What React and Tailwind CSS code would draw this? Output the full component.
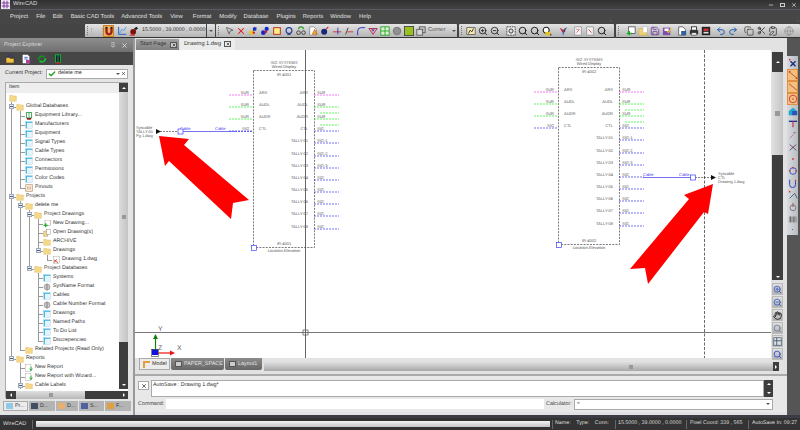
import React from 'react';
import { ZoomIn, ZoomOut, Search, Save, Undo2, Redo2, Copy, Scissors, ClipboardPen, Globe, MousePointer2, X, Check, Pin, Minus, Hand } from 'lucide-react';

const MENU = [
  ['Project', 'ml-[10px]'], ['File', 'ml-[8px]'], ['Edit', 'ml-[7px]'], ['Basic CAD Tools', 'ml-[8px]'],
  ['Advanced Tools', 'ml-[7px]'], ['View', 'ml-[8px]'], ['Format', 'ml-[10px]'], ['Modify', 'ml-[8px]'],
  ['Database', 'ml-[7px]'], ['Plugins', 'ml-[8px]'], ['Reports', 'ml-[7px]'], ['Window', 'ml-[7px]'], ['Help', 'ml-[8px]'],
];

// 12x12 toolbar glyphs
const Ico = ({ children, size = 10 }) => (
  <svg width={size} height={size} viewBox="0 0 12 12" className="shrink-0">{children}</svg>
);

const G = {
  magnet: <Ico><path d="M2 2v5a4 4 0 0 0 8 0V2H8v5a2 2 0 0 1-4 0V2z" fill="#c01818" stroke="#401010" strokeWidth=".5" /><rect x="2" y="1" width="2" height="2" fill="#222" /><rect x="8" y="1" width="2" height="2" fill="#222" /></Ico>,
  chart: <Ico><path d="M2 1v9h9" fill="none" stroke="#3060d0" strokeWidth="1.2" /><path d="M3 9l3-5 2 2 3-5" fill="none" stroke="#40a0e0" strokeWidth="1" /></Ico>,
  redbomb: <Ico><circle cx="5" cy="7" r="3.5" fill="#7a1010" /><path d="M6 3l3-2 2 2-3 2z" fill="#222" /><path d="M1 11h6" stroke="#d02020" strokeWidth="1.2" /></Ico>,
  cursor: <MousePointer2 size={9} color="#222" strokeWidth={1.5} />,
  x: <X size={10} color="#e01818" strokeWidth={2.5} />,
  dotsY: <Ico><path d="M2 10L10 2" stroke="#303030" strokeWidth="1" /><circle cx="8" cy="3.5" r="2.3" fill="#2030c0" /><circle cx="4" cy="8" r="2.6" fill="#e8c820" /><circle cx="7" cy="8" r="1.4" fill="#d02020" /></Ico>,
  dotsB: <Ico><circle cx="8" cy="3.5" r="2.5" fill="#1828c8" /><circle cx="4" cy="8" r="2.8" fill="#1828c8" /><circle cx="7" cy="7" r="1.6" fill="#d02020" /></Ico>,
  note: <Ico><rect x="2" y="2" width="8" height="8" fill="#fff080" stroke="#c03030" strokeWidth="1.2" /></Ico>,
  ring: <Ico><circle cx="6" cy="5.5" r="3.5" fill="none" stroke="#2040a0" strokeWidth="1.4" /><path d="M4 10h4" stroke="#203060" strokeWidth="1.2" /></Ico>,
  bike: <Ico><circle cx="3" cy="8" r="2.2" fill="none" stroke="#333" /><circle cx="9" cy="8" r="2.2" fill="none" stroke="#333" /><path d="M3 4a3 3 0 0 1 6 0" fill="none" stroke="#30a030" strokeWidth="1.4" /></Ico>,
  pageY: <Ico><path d="M2 1h5l3 3v7H2z" fill="#fff" stroke="#555" strokeWidth=".6" /><path d="M5 10l3-6 3 6z" fill="#e8b020" stroke="#c03020" strokeWidth=".6" /></Ico>,
  bomb: <Ico><circle cx="5" cy="7" r="3.6" fill="#182878" /><path d="M7 4l3-3" stroke="#d02040" strokeWidth="1.3" /></Ico>,
  cross: <Ico><path d="M1 7h10" stroke="#d02020" strokeWidth="1" /><path d="M7 2v8" stroke="#2030c0" strokeWidth="1" /></Ico>,
  line: <Ico><path d="M2 10L5 2" stroke="#303030" strokeWidth="1" /><path d="M4 7h7" stroke="#d02020" strokeWidth="1" /></Ico>,
  curve: <Ico><path d="M2 11V6a4 4 0 0 1 4-4h5" fill="none" stroke="#3040c0" strokeWidth="1.2" /></Ico>,
  tri: <Ico><path d="M1 3h10L6 10z" fill="#f0b0c0" stroke="#a02040" strokeWidth="1" /><path d="M4 4h4L6 7z" fill="#3050b0" /></Ico>,
  grid: <Ico><rect x="1" y="1" width="10" height="10" fill="#d8f0d0" stroke="#20a020" /><path d="M6 1v10M1 6h10" stroke="#20a020" /></Ico>,
  disc: <Ico><circle cx="6" cy="6" r="4.5" fill="#909090" stroke="#707070" /></Ico>,
  green: <Ico><rect x="0.5" y="0.5" width="11" height="11" fill="#98c020" stroke="#404040" /></Ico>,
  stack: <Ico><rect x="4" y="1" width="7" height="7" fill="#c0c0c0" stroke="#555" /><rect x="1" y="4" width="7" height="7" fill="#d8d8d8" stroke="#555" /></Ico>,
  ruler: <Ico><rect x="1" y="2" width="10" height="8" fill="#f4e8b0" stroke="#444" strokeWidth=".8" /><path d="M3 9l2-4 2 2 2-4" fill="none" stroke="#222" strokeWidth="1" /></Ico>,
  zin: <ZoomIn size={10} color="#222" strokeWidth={2} />,
  zout: <ZoomOut size={10} color="#222" strokeWidth={2} />,
  zall: <Ico><rect x="1" y="1" width="10" height="10" fill="#eee" stroke="#333" strokeDasharray="2 1" /><circle cx="6" cy="6" r="2.5" fill="#dde" stroke="#222" /></Ico>,
  zw: <Search size={10} color="#222" strokeWidth={2.4} />,
  zy: <Ico><circle cx="5" cy="5" r="3.6" fill="#fff" stroke="#222" strokeWidth="1.3" /><path d="M8 8l3 3" stroke="#222" strokeWidth="1.6" /><rect x="4" y="7" width="6" height="4" fill="#e8c020" /></Ico>,
  pen: <Ico><path d="M2 2l4 7 3-3z" fill="#d02040" /><path d="M8 3l-2 8" stroke="#2080e0" strokeWidth="1.4" /><path d="M10 2L7 7" stroke="#202020" /></Ico>,
  pgA: <Ico><rect x="2" y="1" width="8" height="10" fill="#f4f4f4" stroke="#999" /><path d="M4 8l4-4M4 4h3" stroke="#e06060" /></Ico>,
  pgB: <Ico><rect x="2" y="1" width="8" height="10" fill="#eee" stroke="#999" /><path d="M4 4l4 4" stroke="#e04040" /></Ico>,
  newg: <Ico><rect x="3" y="1" width="8" height="8" fill="#fff" stroke="#555" /><path d="M1 9h6M4 6v5" stroke="#10b020" strokeWidth="1.6" /></Ico>,
  folder: <Ico><path d="M1 3h4l1 1h5v7H1z" fill="#f0d070" stroke="#c8a040" strokeWidth=".5" /><rect x="6" y="1" width="5" height="7" fill="#fff" stroke="#aaa" strokeWidth=".5" /></Ico>,
  floppy: <Save size={10} color="#7040a0" strokeWidth={2} />,
  floppyY: <Ico><rect x="1" y="2" width="9" height="9" fill="#8050b0" /><rect x="3" y="3" width="5" height="3" fill="#fff" /><path d="M6 6l2 2 3-6" fill="none" stroke="#e0c020" strokeWidth="1.3" /></Ico>,
  doc: <Ico><path d="M2 1h5l3 3v7H2z" fill="#fff" stroke="#333" strokeWidth=".8" /><rect x="5" y="6" width="6" height="5" fill="#3060a0" /></Ico>,
  print: <Ico><rect x="3" y="1" width="6" height="4" fill="#fff" stroke="#222" /><rect x="1" y="5" width="10" height="5" fill="#303030" /><rect x="3" y="8" width="6" height="3" fill="#ddd" stroke="#222" strokeWidth=".5" /></Ico>,
  film: <Ico><rect x="1" y="1" width="10" height="10" fill="#202020" /><rect x="3" y="3" width="6" height="3" fill="#d03030" /><rect x="3" y="7" width="6" height="2" fill="#ddd" /></Ico>,
  undo: <Undo2 size={10} color="#2060b0" strokeWidth={2.4} />,
  redo: <Redo2 size={10} color="#2060b0" strokeWidth={2.4} />,
  copy: <Copy size={10} color="#333" strokeWidth={1.6} />,
  cut: <Scissors size={9} color="#222" strokeWidth={2} />,
  paste: <ClipboardPen size={10} color="#333" strokeWidth={1.8} />,
  globe: <Globe size={10} color="#8a8a8a" strokeWidth={1.6} />,
};

const Cells = ({ names }) => (
  <>
    {names.map((n, i) => (
      <span key={i} className="w-[12px] h-full flex items-center justify-center">{G[n]}</span>
    ))}
  </>
);

const Grip = () => (
  <span className="w-[3px] h-[9px] mx-[1px] shrink-0 border-l border-dotted border-[#777]" />
);

const Drop = () => <span className="w-0 h-0 border-x-[2px] border-x-transparent border-t-[2px] border-t-[#555]" />;

const Toolbar = ({ className, children }) => (
  <div className={`h-[14px] flex items-center rounded-[1px] bg-gradient-to-b from-[#e4e4e4] to-[#b4b4b4] border-b border-[#333] shrink-0 ${className}`}>
    {children}
  </div>
);

function TopToolbars() {
  return (
    <div className="h-[14px] flex pl-[85px] bg-[#444] shrink-0">
      <Toolbar className="w-[130px] pl-[1px]">
        <Grip />
        <span className="w-[12px] h-[6px] border-x border-dotted border-[#aaa]" />
        <span className="w-[11px] h-[12px] flex items-center justify-center bg-[#f0b060] border border-[#d08020]">{G.magnet}</span>
        <span className="w-[2px]" />
        <Cells names={['chart', 'redbomb']} />
        <span className="ml-[2px] w-[64px] text-[5.3px] text-[#333] whitespace-nowrap">15.5000 , 39.0000 , 0.0000</span>
        <span className="w-[9px] h-full flex items-center justify-center border-l border-[#444]"><Drop /></span>
      </Toolbar>
      <Toolbar className="ml-[1px] w-[241px] pl-[1px]">
        <Grip />
        <span className="w-[1px]" />
        <Cells names={['cursor', 'x', 'dotsY', 'dotsB', 'note', 'ring', 'bike', 'pageY', 'bomb', 'cross', 'line', 'curve', 'tri', 'grid', 'disc', 'green', 'stack']} />
        <span className="ml-[1px] w-[24px] text-[5.7px] text-[#555]">Corner</span>
        <Drop />
      </Toolbar>
      <Toolbar className="ml-[2px] w-[155px] pl-[1px]">
        <Grip />
        <Cells names={['ruler', 'zin', 'zout']} />
        <span className="w-[4px]" />
        <Cells names={['zall', 'zw', 'zw', 'zy']} />
        <span className="w-[4px]" />
        <Cells names={['pen']} />
        <span className="w-[3px]" />
        <Cells names={['pgA', 'pgB', 'zw']} />
        <span className="ml-[1px]"><Drop /></span>
      </Toolbar>
      <Toolbar className="ml-[2px] w-[184px] pl-[1px]">
        <Grip />
        <span className="w-[3px]" />
        <Cells names={['newg', 'folder', 'floppy', 'floppyY']} />
        <span className="w-[3px]" />
        <Cells names={['doc', 'print', 'film']} />
        <span className="w-[3px]" />
        <Cells names={['undo', 'redo']} />
        <span className="w-[4px]" />
        <Cells names={['copy', 'cut', 'paste']} />
        <span className="w-[4px]" />
        <Cells names={['globe']} />
        <span className="ml-[1px]"><Drop /></span>
      </Toolbar>
    </div>
  );
}

// tree icons
const TreeIcon = ({ type }) => {
  if (type === 'folder') return <Ico size={8}><path d="M1 2h4l1 1h5v8H1z" fill="#f6d88a" stroke="#dcb860" strokeWidth=".6" /></Ico>;
  if (type === 'table') return <Ico size={8}><rect x="1" y="1" width="10" height="10" fill="#e4f4fa" stroke="#a8d0e0" strokeWidth=".6" /><path d="M1 2h10M2 2v9" stroke="#30b0e8" strokeWidth="1.6" /></Ico>;
  if (type === 'gear') return <Ico size={8}><circle cx="6" cy="6" r="4.5" fill="#c8c8c8" stroke="#909090" /><path d="M6 1v10" stroke="#808080" strokeWidth="1.4" /></Ico>;
  if (type === 'pin') return <Ico size={8}><rect x="1" y="1" width="10" height="10" fill="#f6e8d8" stroke="#b89878" /><path d="M3 6h6M4 3v6M8 3v6" stroke="#c8a080" strokeWidth=".8" /></Ico>;
  if (type === 'equip') return <Ico size={8}><rect x="2" y="1" width="8" height="8" fill="#fff" stroke="#109030" strokeWidth="1.2" /><path d="M6 1v8" stroke="#109030" /><rect x="3" y="9" width="6" height="2.5" fill="#a01010" /></Ico>;
  if (type === 'new') return <Ico size={8}><rect x="3" y="0" width="8" height="8" fill="#fff" stroke="#666" strokeWidth=".6" /><path d="M1 8h6M4 5v6" stroke="#10b020" strokeWidth="1.8" /></Ico>;
  if (type === 'open') return <Ico size={8}><path d="M1 3h6v8H1z" fill="#f6d88a" stroke="#a08040" strokeWidth=".6" /><rect x="5" y="1" width="6" height="7" fill="#fff" stroke="#777" strokeWidth=".6" /></Ico>;
  if (type === 'dwg') return <Ico size={8}><rect x="2" y="0.5" width="9" height="11" fill="#fff" stroke="#999" strokeWidth=".6" /><path d="M3 6l6 4M3 10l4-5" stroke="#d83018" strokeWidth="1.3" /></Ico>;
  if (type === 'report') return <Ico size={8}><rect x="1" y="0.5" width="8" height="11" fill="#fff" stroke="#999" strokeWidth=".6" /><path d="M9 4v5M7 7l2 3 2-3" fill="none" stroke="#10a020" strokeWidth="1.3" /></Ico>;
  return null;
};

const TREE = [
  { t: 'Global Databases', open: true, kids: [
    { t: 'Equipment Library...', i: 'equip' }, { t: 'Manufacturers', i: 'table' }, { t: 'Equipment', i: 'table' },
    { t: 'Signal Types', i: 'table' }, { t: 'Cable Types', i: 'table' }, { t: 'Connectors', i: 'table' },
    { t: 'Permissions', i: 'table' }, { t: 'Color Codes', i: 'table' }, { t: 'Pinouts', i: 'pin' },
  ] },
  { t: 'Projects', open: true, kids: [
    { t: 'delete me', open: true, kids: [
      { t: 'Project Drawings', open: true, kids: [
        { t: 'New Drawing...', i: 'new' }, { t: 'Open Drawing(s)', i: 'open' }, { t: 'ARCHIVE' },
        { t: 'Drawings', open: true, kids: [{ t: 'Drawing 1.dwg', i: 'dwg' }] },
      ] },
      { t: 'Project Databases', open: true, kids: [
        { t: 'Systems', i: 'table' }, { t: 'SysName Format', i: 'gear' }, { t: 'Cables', i: 'table' },
        { t: 'Cable Number Format', i: 'gear' }, { t: 'Drawings', i: 'table' }, { t: 'Named Paths', i: 'table' },
        { t: 'To Do List', i: 'table' }, { t: 'Discrepencies', i: 'table' },
      ] },
    ] },
    { t: 'Related Projects (Read Only)' },
  ] },
  { t: 'Reports', open: true, kids: [
    { t: 'New Report', i: 'report' }, { t: 'New Report with Wizard...', i: 'report' },
    { t: 'Cable Labels', closed: true, more: true },
  ] },
];

function flatten(nodes, guides, out) {
  nodes.forEach((n, idx) => {
    const last = idx === nodes.length - 1 && !n.more;
    out.push({ ...n, guides, last });
    if (n.kids) flatten(n.kids, [...guides, !last], out);
  });
  return out;
}
const ROWS = flatten(TREE, [], []);

const TreeRow = ({ row }) => (
  <div className="h-[9px] flex items-center shrink-0 text-[5.3px] text-[#333] whitespace-nowrap">
    {row.guides.map((on, i) => (
      <span key={i} className="relative w-[9px] h-full shrink-0">
        {on && <span className="absolute left-[5px] top-0 bottom-0 w-px bg-[#999]" />}
      </span>
    ))}
    <span className="relative w-[9px] h-full shrink-0">
      <span className={`absolute left-[5px] top-0 w-px bg-[#999] ${row.last ? 'h-1/2' : 'h-full'}`} />
      <span className="absolute left-[5px] top-1/2 w-[5px] h-px bg-[#999]" />
      {(row.open || row.closed) && (
        <span className="absolute left-[3px] top-[2px] w-[5px] h-[5px] bg-[#e8eef4] border border-[#9aa8b8] flex items-center justify-center">
          <span className="w-[3px] h-px bg-[#506080]" />
        </span>
      )}
    </span>
    <span className="ml-[1px] w-[8px] flex justify-center shrink-0"><TreeIcon type={row.i || 'folder'} /></span>
    <span className="ml-[2px]">{row.t}</span>
  </div>
);

const BOTTOM_TABS = [
  ['Pr...', 'w-[25px]', true], ['D...', 'w-[26px]'], ['D...', 'w-[22px]'], ['S...', 'w-[25px]'], ['F...', 'w-[26px]'],
];

function LeftPanel() {
  return (
    <div className="w-[133px] shrink-0 flex flex-col bg-[#e4e4e4]">
      <div className="h-[14px] flex items-center justify-between px-[4px] bg-gradient-to-b from-[#8e8e8e] to-[#707070] text-[5.4px] text-[#ddd] shrink-0">
        <span>Project Explorer</span>
        <span className="flex items-center gap-[5px] pr-[1px]">
          <Pin size={6} color="#ddd" />
          <X size={7} color="#ddd" strokeWidth={3} />
        </span>
      </div>
      <div className="h-[13px] flex items-center gap-[6px] pl-[5px] bg-[#464646] shrink-0">
        <Ico><path d="M1 4h4l1 1h5v6H1z" fill="#f0c040" stroke="#222" strokeWidth=".8" /><path d="M4 3l3-2 2 2" stroke="#2030a0" fill="none" /></Ico>
        <Ico><path d="M2 1h6l2 2v8H2z" fill="#fff" /><path d="M4 4h4M4 6h4" stroke="#3050c0" /><rect x="6" y="7" width="5" height="4" fill="#b040a0" /></Ico>
        <Ico><path d="M2 7a4 4 0 0 1 7-3" fill="none" stroke="#109020" strokeWidth="2" /><path d="M10 5a4 4 0 0 1-7 3" fill="none" stroke="#10c030" strokeWidth="2" /></Ico>
        <Ico><rect x="3" y="1" width="6" height="9" fill="#123" stroke="#10c030" /><path d="M6 1v9" stroke="#10c030" /><rect x="4" y="10" width="4" height="2" fill="#c02020" /></Ico>
      </div>
      <div className="h-[17px] flex items-center pl-[5px] text-[5.4px] text-[#333] shrink-0">
        <span className="w-[41px] whitespace-nowrap">Current Project:</span>
        <div className="w-[82px] h-[10px] flex items-center bg-white border border-[#aaa] pl-[1px]">
          <Check size={8} color="#20a020" strokeWidth={4} />
          <span className="ml-[2px] flex-1 text-[5.4px]">delete me</span>
          <Drop />
          <X size={5} color="#333" strokeWidth={3} className="mx-[1px]" />
        </div>
      </div>
      <div className="h-[316px] mx-[5px] flex flex-col shrink-0 border border-[#aaa] border-r-0">
        <div className="h-[306px] flex">
          <div className="w-[113px] bg-white overflow-hidden flex flex-col">
            <div className="h-[10px] flex items-center pl-[3px] bg-[#eee] text-[5.3px] text-[#333] shrink-0">Item</div>
            <div className="h-[9px] pl-[3px] flex items-center shrink-0"><TreeIcon type="folder" /></div>
            {ROWS.map((r, i) => <TreeRow key={i} row={r} />)}
          </div>
          <div className="w-[9px] flex flex-col bg-[#3e3e3e]">
            <div className="h-[9px] flex items-center justify-center"><span className="w-0 h-0 border-x-[2px] border-x-transparent border-b-[2px] border-b-white" /></div>
            <div className="h-[250px] flex items-center justify-center bg-gradient-to-r from-[#dcdcdc] to-[#c4c4c4]"><span className="w-[4px] h-[4px] bg-[#999]" /></div>
            <div className="flex-1 flex items-end justify-center pb-[3px]"><span className="w-0 h-0 border-x-[2px] border-x-transparent border-t-[2px] border-t-white" /></div>
          </div>
        </div>
        <div className="h-[2px] bg-white shrink-0" />
        <div className="h-[8px] flex bg-white shrink-0">
          <div className="w-[10px] bg-[#3e3e3e] flex items-center justify-center"><span className="w-0 h-0 border-y-[2px] border-y-transparent border-r-[2px] border-r-white" /></div>
          <div className="w-[69px] bg-gradient-to-b from-[#e0e0e0] to-[#b8b8b8] flex items-center justify-center"><span className="w-[4px] h-[4px] bg-[#999]" /></div>
          <div className="w-[43px] bg-[#3e3e3e] flex items-center justify-end pr-[3px]"><span className="w-0 h-0 border-y-[2px] border-y-transparent border-l-[2px] border-l-white" /></div>
        </div>
      </div>
      <div className="mt-[3px] h-[10px] pl-[3px] flex gap-[1px] shrink-0">
        {BOTTOM_TABS.map(([label, w, active], i) => (
          <div key={i} className={`${w} flex items-center gap-[2px] pl-[2px] text-[5.4px] text-[#333] ${active ? 'bg-[#ececec] border border-[#aaa]' : 'bg-[#b4b4b4]'}`}>
            <span className={`w-[7px] h-[6px] shrink-0 ${['bg-[#90c8e8]', 'bg-[#405060]', 'bg-[#e8b070]', 'bg-[#5060a0]', 'bg-[#e0a040]'][i]}`} />
            {label}
          </div>
        ))}
      </div>
    </div>
  );
}

const INNER_L = ['ARS', 'AUDL', 'AUDR', 'CTL'];
const OUTER_L = ['SUR', 'SUR', 'SUR', 'SIG'];
const INNER_R = ['ARS', 'AUDL', 'AUDR', 'CTL', 'TALLY-01', 'TALLY-02', 'TALLY-03', 'TALLY-04', 'TALLY-05', 'TALLY-06', 'TALLY-07', 'TALLY-08'];
const OUTER_R = ['SUR', 'SUR', 'SUR', 'SIG', 'SIG-1', 'SIG-2', 'SIG-3', 'SIG', 'SIG', 'SIG', 'SIG', 'SIG'];
const ROW_Y = [95, 107, 119, 131, 143, 156, 168, 180, 192, 204, 216, 229];
const pinColor = (i) => (i === 0 ? '#f040f0' : i < 3 ? '#20f020' : '#3838f0');

// one rack unit of the schematic, x/y are the offset from the first one
const Unit = ({ dx, dy, name }) => (
  <g transform={`translate(${dx} ${dy})`} fontSize="4" fill="#555">
    <rect x="253.5" y="70.5" width="61" height="177" fill="none" stroke="#444" strokeWidth=".7" strokeDasharray="2 1.2" />
    <text x="284" y="64" textAnchor="middle">SIG SYSTEMS</text>
    <text x="284" y="68" textAnchor="middle">Wired Display</text>
    <text x="284" y="76" textAnchor="middle">{name}</text>
    <text x="284" y="245" textAnchor="middle">{name}</text>
    <text x="284" y="252" textAnchor="middle">Location:Elevation</text>
    <rect x="251.5" y="245.5" width="5" height="5" fill="#fff" stroke="#4040f0" strokeWidth=".7" />
    {INNER_L.map((t, i) => (
      <g key={t}>
        <path d={`M229 ${ROW_Y[i]}h24`} stroke={pinColor(i)} strokeWidth=".7" strokeDasharray="2 1" />
        <text x="249" y={ROW_Y[i] - 1.5} textAnchor="end">{OUTER_L[i]}</text>
        <text x="259" y={ROW_Y[i] - 1.5}>{t}</text>
      </g>
    ))}
    {INNER_R.map((t, i) => (
      <g key={i}>
        <path d={`M314 ${ROW_Y[i]}h25`} stroke={pinColor(i)} strokeWidth=".7" strokeDasharray="2 1" />
        <text x="308" y={ROW_Y[i] - 1.5} textAnchor="end">{t}</text>
        <text x="317" y={ROW_Y[i] - 1.5}>{OUTER_R[i]}</text>
      </g>
    ))}
    <path d="M320 113h19M320 125h19" stroke="#20f020" strokeWidth=".7" strokeDasharray="2 1" />
  </g>
);

function Drawing() {
  return (
    <svg width="636" height="308" viewBox="135 50 636 308" className="block bg-white shrink-0">
      <path d="M135 332.5h636" stroke="#555" strokeWidth=".8" />
      <path d="M305.5 50v308" stroke="#555" strokeWidth=".9" />
      <path d="M704.5 50v308" stroke="#444" strokeWidth=".8" strokeDasharray="3 1.5" />
      <rect x="303" y="330" width="5" height="5" fill="none" stroke="#555" strokeWidth=".7" />

      <Unit dx={0} dy={0} name="IR-4001" />
      <Unit dx={305} dy={-3} name="IR-4002" />

      <g fontSize="4" fill="#555">
        <text x="136" y="128.5">Syscable</text>
        <text x="136" y="132.5">TALLY-01</text>
        <text x="136" y="136.5">Pg 1.dwg</text>
        <text x="718" y="174.5">Syscable</text>
        <text x="718" y="178.5">CTL</text>
        <text x="718" y="182.5">Drawing 1.dwg</text>
      </g>
      <g fontSize="4" fill="#3838f0">
        <text x="180" y="130">Cable</text>
        <text x="215" y="130">Cable</text>
        <text x="643" y="175.5">Cable</text>
        <text x="679" y="175.5">Cable</text>
      </g>
      <path d="M180 131.5h55M643 177.5h48" stroke="#5050f0" strokeWidth=".8" />
      <path d="M235 131.5h18" stroke="#3838f0" strokeWidth=".7" strokeDasharray="2 1" />
      <path d="M160 131.5h18M695 177.5h16" stroke="#333" strokeWidth=".6" strokeDasharray="2 1" />
      <rect x="178" y="129" width="5" height="5" fill="#fff" stroke="#4040f0" strokeWidth=".7" />
      <rect x="690.5" y="175" width="5" height="5" fill="#fff" stroke="#4040f0" strokeWidth=".7" />
      <path d="M156 129l5 2.5-5 2.5zM711 175l5 2.5-5 2.5z" fill="#111" />

      <polygon points="159,136 189,139 184,145 249,200 233,203 231,219 169,161 165,166" fill="#ff0000" />
      <polygon points="713,184 684,195 689,199 630,269 645,268 648,284 704,212 708,214" fill="#ff0000" />

      <path d="M155.5 352V335" stroke="#108010" strokeWidth="1.2" />
      <path d="M155.5 334l-2.5 5h5z" fill="#108010" />
      <path d="M156 353h17" stroke="#f01010" strokeWidth="1.2" />
      <path d="M175 353l-5-2.5v5z" fill="#f01010" />
      <rect x="152" y="349" width="6" height="6" fill="#1010e0" />
      <rect x="151.5" y="349.5" width="7" height="7" fill="none" stroke="#555" strokeWidth=".7" />
      <g fontSize="7" fill="#666">
        <text x="158" y="331">Y</text>
        <text x="158" y="350">Z</text>
        <text x="177" y="350">X</text>
      </g>
    </svg>
  );
}

const SideBtn = ({ children }) => (
  <div className="w-[11px] h-[12px] mt-[1px] flex items-center justify-center bg-gradient-to-b from-[#e0e0e0] to-[#b0b0b0] border border-[#bbb] shrink-0">{children}</div>
);

function VScroll() {
  return (
    <div className="w-[11px] ml-px flex flex-col shrink-0 pt-[2px]">
      <div className="h-[20px] bg-[#3e3e3e] flex items-center justify-center shrink-0"><span className="w-0 h-0 border-x-[2px] border-x-transparent border-b-[2px] border-b-white" /></div>
      <div className="h-[83px] bg-gradient-to-r from-[#e0e0e0] to-[#c4c4c4] flex items-center justify-center shrink-0"><span className="w-[5px] h-[5px] bg-[#999]" /></div>
      <div className="h-[125px] bg-[#3e3e3e] flex items-end justify-center pb-[2px] shrink-0"><span className="w-0 h-0 border-x-[2px] border-x-transparent border-t-[2px] border-t-white" /></div>
      <div className="h-[2px] shrink-0" />
      <SideBtn><ZoomIn size={9} color="#4060c0" strokeWidth={2.4} /></SideBtn>
      <SideBtn><ZoomOut size={9} color="#4060c0" strokeWidth={2.4} /></SideBtn>
      <SideBtn><Hand size={9} color="#222" strokeWidth={2.4} /></SideBtn>
      <SideBtn><Search size={9} color="#7080a0" strokeWidth={2.4} /></SideBtn>
      <SideBtn><Ico size={9}><rect x="1" y="1" width="10" height="10" fill="#d8e0e8" stroke="#506070" /><path d="M1 5h10M5 1v10" stroke="#304050" /></Ico></SideBtn>
      <SideBtn><Search size={9} color="#3050d0" strokeWidth={2.4} /></SideBtn>
    </div>
  );
}

const MODEL_TABS = [
  ['PAPER_SPACE', 'w-[53px]'],
  ['Layout1', 'w-[37px]'],
];

function TabBar() {
  return (
    <div className="h-[13px] flex shrink-0 text-[5.4px]">
      <div className="w-[4px]" />
      <div className="w-[31px] h-[12px] flex items-center gap-[2px] pl-[3px] bg-[#ececec] border border-[#aaa] text-[#333]">
        <span className="w-[7px] h-[7px] border-l-2 border-t-2 border-[#e0a040]" />
        Model
      </div>
      {MODEL_TABS.map(([t, w]) => (
        <div key={t} className={`${w} ml-[1px] h-[12px] flex items-center gap-[2px] pl-[4px] bg-gradient-to-b from-[#8c8c8c] to-[#666] text-[#e4e4e4] whitespace-nowrap rounded-b-[2px]`}>
          <span className="w-[7px] h-[6px] bg-[#ccc] border border-[#555] shrink-0" />
          {t}
        </div>
      ))}
      <div className="mt-[4px] h-[9px] flex-1 flex ml-[2px] mr-[8px] bg-gradient-to-b from-[#e0e0e0] to-[#a8a8a8]">
        <div className="flex-1 flex items-center justify-end pr-[140px]"><span className="w-[4px] h-[4px] bg-[#999]" /></div>
        <div className="w-[6px] bg-[#3e3e3e] flex items-center justify-center"><span className="w-0 h-0 border-y-[2px] border-y-transparent border-l-[2px] border-l-white" /></div>
      </div>
    </div>
  );
}

function CommandPanel() {
  return (
    <div className="h-[38px] mt-[3px] border-t-2 border-[#aaa] bg-[#e8e8e8] pl-[3px] pr-[14px] flex flex-col shrink-0 text-[5.4px] text-[#444]">
      <div className="mt-[4px] h-[17px] flex">
        <div className="w-[11px] h-[9px] mt-px flex items-center justify-center bg-white border border-[#aaa]"><X size={6} color="#333" strokeWidth={3} /></div>
        <div className="ml-[2px] flex-1 bg-white border border-[#aaa] pl-[1px] text-[#333] leading-[8px]">AutoSave : Drawing 1.dwg*</div>
        <div className="w-[9px] bg-[#3e3e3e] flex flex-col items-center justify-between py-[3px]">
          <span className="w-0 h-0 border-x-[2px] border-x-transparent border-b-[2px] border-b-white" />
          <span className="w-0 h-0 border-x-[2px] border-x-transparent border-t-[2px] border-t-white" />
        </div>
      </div>
      <div className="mt-[2px] h-[10px] flex items-center">
        <span className="w-[28px]">Command:</span>
        <div className="w-[378px] h-[10px] bg-white" />
        <span className="ml-[2px] w-[28px]">Calculator:</span>
        <div className="flex-1 h-[11px] flex items-center justify-between px-[2px] bg-white border border-[#aaa]">
          <span className="text-[5px]">«</span>
          <Drop />
        </div>
      </div>
    </div>
  );
}

const DOCK = [
  <Ico key="0"><path d="M3 4l6 6M9 4l-6 6" stroke="#203080" strokeWidth="1.8" /><circle cx="2" cy="2" r="1" fill="#e03030" /></Ico>,
  <Ico key="1"><path d="M1 2l10 8" stroke="#c04030" strokeWidth="1" /><circle cx="2" cy="2" r="1" fill="#e03030" /><circle cx="10" cy="10" r="1" fill="#e03030" /></Ico>,
  <Ico key="2"><path d="M1 2l10 8" stroke="#c04030" strokeWidth="1" /></Ico>,
  <Ico key="3"><circle cx="6" cy="6" r="4.5" fill="none" stroke="#c03040" strokeWidth="1" /><circle cx="6" cy="6" r="1" fill="#c03040" /></Ico>,
  <Ico key="4"><path d="M1 6l5-4 5 4v5H1z" fill="#20a8c8" /><rect x="5" y="6" width="6" height="5" fill="#3050c0" /></Ico>,
  <Ico key="5"><path d="M1 4h10" stroke="#203090" strokeWidth="1.6" /><path d="M6 4v7" stroke="#c03040" strokeWidth="1.4" /></Ico>,
  <Ico key="6"><path d="M2 10L9 3" stroke="#d080a0" strokeWidth="1.2" /><path d="M6 3h4" stroke="#9090a0" /></Ico>,
  <Ico key="7"><path d="M2 3l8 7M10 3l-8 7" stroke="#303060" strokeWidth=".9" /><circle cx="6" cy="6" r="1" fill="#e04040" /></Ico>,
  <Ico key="8"><circle cx="6" cy="6" r="1.2" fill="#e04040" /></Ico>,
  <Ico key="9"><circle cx="6" cy="6" r="4" fill="none" stroke="#3040c0" strokeWidth="1" /><circle cx="2" cy="6" r="1" fill="#e03030" /><circle cx="10" cy="6" r="1" fill="#e03030" /><circle cx="6" cy="2" r="1" fill="#e03030" /></Ico>,
  <Ico key="10"><path d="M2 2v6a3 3 0 0 0 7 0V4" fill="none" stroke="#3040c0" strokeWidth="1.2" /><circle cx="9" cy="3" r="1" fill="#e03030" /></Ico>,
  <Ico key="11"><path d="M2 10L8 4l3 6" fill="none" stroke="#405080" strokeWidth="1" /><circle cx="2" cy="2" r="1" fill="#e03030" /></Ico>,
  <Ico key="12"><circle cx="6" cy="7" r="3.5" fill="none" stroke="#808080" strokeWidth="1.2" /><path d="M6 1v5" stroke="#a04040" /></Ico>,
  <Ico key="13"><rect x="1" y="3" width="10" height="7" fill="#a0a0a0" /><path d="M3 3v7M7 3v7" stroke="#606060" /></Ico>,
];

function RightDock() {
  return (
    <div className="w-[13px] shrink-0 bg-[#555] pt-[18px]">
      <div className="w-[11px] h-[179px] flex flex-col items-center bg-gradient-to-r from-[#d8dce0] to-[#b8bcc0] pt-[1px]">
        {DOCK.map((ic, i) => (
          <span key={i} className={`w-[11px] h-[12px] flex items-center justify-center shrink-0 ${i >= 1 && i <= 3 ? 'bg-[#f4c080] border border-[#e09040]' : ''}`}>{ic}</span>
        ))}
        <span className="mt-[4px] w-px h-px bg-[#666]" />
      </div>
    </div>
  );
}

function StatusBar() {
  return (
    <div className="h-[15px] shrink-0 bg-[#333] border-t-[3px] border-[#3c3c44] flex items-center text-[5.3px] text-[#ddd] whitespace-nowrap">
      <span className="ml-[3px] w-[29px] text-[5.6px]">WireCAD</span>
      <span className="w-px h-[9px] bg-[#666]" />
      <div className="ml-[3px] w-[514px] h-[6px] bg-gradient-to-b from-[#f4f4f4] to-[#c4c4c4]" />
      <span className="ml-[2px] w-px h-[9px] bg-[#666]" />
      <span className="ml-[2px] w-[54px] mr-[6px] flex justify-between">
        <span>Name:</span>
        <span>Type:</span>
        <span>Conn:</span>
      </span>
      <span className="w-px h-[9px] bg-[#666]" />
      <span className="ml-[2px] w-[68px]">15.5000 , 39.0000 , 0.0000</span>
      <span className="w-px h-[9px] bg-[#666]" />
      <span className="ml-[3px] w-[58px]">Pixel Coord: 339 , 565</span>
      <span className="w-px h-[9px] bg-[#666]" />
      <span className="ml-[3px]">AutoSave In: 09:27</span>
    </div>
  );
}

export default function App() {
  return (
    <div className="w-[800px] h-[430px] overflow-hidden flex flex-col bg-[#444] [font-family:'Liberation_Sans',Arial,sans-serif] [text-rendering:geometricPrecision]">
      {/* title bar */}
      <div className="h-[10px] flex items-center pl-[1px] pr-[3px] bg-gradient-to-b from-[#303030] to-[#444] border-b border-[#5a5a64] shrink-0">
        <Ico size={9}><rect width="12" height="12" fill="#f0e8f4" /><path d="M1 4h10M1 8h10M4 1v10M8 1v10" stroke="#8040a0" strokeWidth="1.4" /></Ico>
        <span className="ml-[3px] flex-1 text-[5.8px] text-[#ddd]">WireCAD</span>
        <span className="flex items-center gap-[6px] text-[#ccc]">
          <Minus size={6} strokeWidth={3} />
          <span className="w-[5px] h-[4px] border border-[#ccc]" />
          <X size={6} strokeWidth={3} />
        </span>
      </div>
      {/* menu */}
      <div className="h-[14px] flex items-center bg-[#464646] text-[5.85px] text-[#e0e0e0] shrink-0 whitespace-nowrap">
        {MENU.map(([m, ml]) => <span key={m} className={ml}>{m}</span>)}
      </div>
      <TopToolbars />
      <div className="flex-1 min-h-0 flex">
        <LeftPanel />
        <div className="flex-1 min-w-0 flex flex-col bg-[#e2e2e2] border-l-2 border-[#999]">
          <div className="h-[12px] flex items-end pl-[1px] shrink-0 text-[5.6px] whitespace-nowrap">
            <div className="w-[43px] h-[11px] flex items-center justify-between pl-[4px] pr-[2px] bg-gradient-to-b from-[#a0a0a0] to-[#808080] text-[#333] rounded-t-[1px]">
              Start Page
              <span className="w-[7px] h-[6px] flex items-center justify-center bg-[#ccc] border border-[#555]"><X size={4} color="#222" strokeWidth={4} /></span>
            </div>
            <div className="w-[55px] ml-[1px] h-[12px] flex items-center justify-between pl-[4px] pr-[4px] bg-[#ececec] text-[#333]">
              Drawing 1.dwg
              <span className="w-[7px] h-[6px] flex items-center justify-center bg-[#eee] border border-[#555]"><X size={4} color="#222" strokeWidth={4} /></span>
            </div>
          </div>
          <div className="h-[308px] flex shrink-0">
            <Drawing />
            <VScroll />
          </div>
          <TabBar />
          <CommandPanel />
        </div>
        <RightDock />
      </div>
      <StatusBar />
    </div>
  );
}
